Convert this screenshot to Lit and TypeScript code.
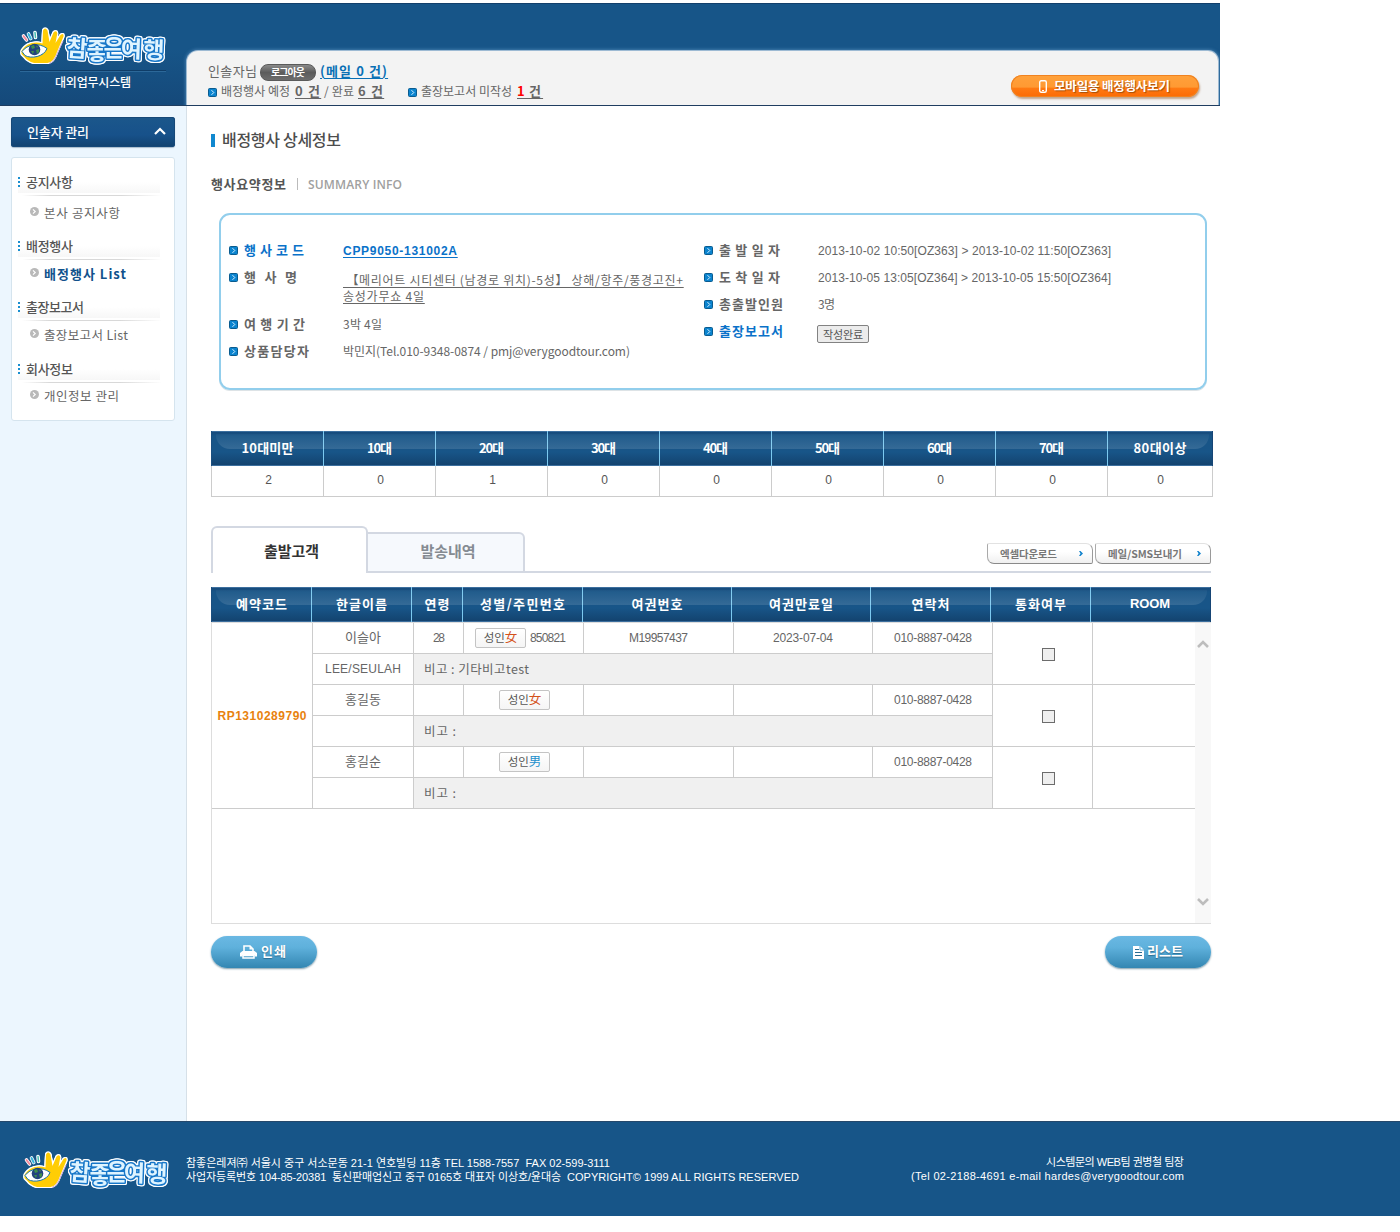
import { LitElement, html, css, svg, nothing } from "lit";
import { customElement, property } from "lit/decorators.js";

/** A single line of text whose tracking is set so that it spans `w` pixels. */
@customElement("fit-text")
class FitText extends LitElement {
  @property({ type: Number }) w = 0;
  @property() text = "";

  static styles = css`
    :host { display: inline-block; white-space: pre; flex: none; text-align: left; }
    .run { display: inline-block; text-decoration: inherit; }
  `;

  render() {
    return html`<span class="run">${this.text}</span>`;
  }

  updated() {
    const run = this.renderRoot.querySelector<HTMLElement>(".run")!;
    run.style.letterSpacing = "0";
    const natural = run.getBoundingClientRect().width;
    const n = Math.max(1, [...this.text].length - 1);
    const gap = (this.w - natural) / n;
    run.style.letterSpacing = `${gap.toFixed(3)}px`;
    run.style.marginRight = `${(-gap).toFixed(3)}px`;
    this.style.width = `${this.w}px`;
  }
}

const t = (text: string, w: number, cls = "") =>
  html`<fit-text class=${cls} .text=${text} .w=${w}></fit-text>`;

const brandLogo = html`
  <svg class="brand" width="152" height="46" viewBox="17 22 152 46" role="img">
    <g class="hand-outline">
      <path fill="#ffcd05" d="M21.500 51 C26 43.500 34 41 42.500 43.500 L43 30.500 Q45 26.500 47.500 30.500 L49.500 42 L53.500 32.500 Q56.500 29.500 57.300 33.500 L55.500 43 L60.500 35 Q64 32.500 63.500 36.500 L57 52 Q54 62 47.500 63 L34 63 Q27.500 61 24.500 57 L21.500 54 Z"/>
    </g>
    <path fill="none" stroke="#c7a3d8" stroke-width="1" d="M63 41 L57.500 53 Q54.500 61.500 49 63.500"/>
    <path fill="#fff" stroke="#1675a8" stroke-width="1" d="M22 51.500 C27 44.500 39 42 47 48.500 C44 57 31 59 25 55.500 Z"/>
    <circle cx="34.500" cy="49.500" r="5.800" fill="#24427d"/>
    <path fill="#3f8f4c" d="M31 46l3-1 1 3-3 1zM36 50l3-1v3l-2 2zM31 51l3 0-1 3zM36 45.500l2 1-1 1.500z"/>
    <g fill="none" stroke-width="2" stroke-linecap="round">
      <path stroke="#fff" stroke-width="3.600" d="M23.500 36l3 4M28.500 34l2.200 4.500M35 32.500l.5 5"/>
      <path stroke="#f48a9c" d="M23.500 36l3 4"/>
      <path stroke="#35b5dc" d="M28.500 34l2.200 4.500"/>
      <path stroke="#46c0b2" stroke-width="1.500" d="M35 32.500l.5 5"/>
    </g>
    <text class="brand-name" x="66 86.500 103.500 120.500 143" y="56 58.500 56 57 58" rotate="4 0 0 2 2">참좋은여행</text>
  </svg>`;

const bullet = html`
  <svg class="bullet" width="9" height="9" viewBox="0 0 9 9">
    <rect x=".5" y=".5" width="8" height="8" rx="1" fill="#0b84cf" stroke="#0a5b8e"/>
    <path d="M3.500 2.200L5.800 4.500 3.500 6.800" fill="none" stroke="#d9f1ff"/>
  </svg>`;

const ring = html`
  <svg class="ring" width="9" height="9" viewBox="0 0 9 9">
    <circle cx="4.500" cy="4.500" r="4.500" fill="#b9b9b9"/>
    <path d="M3 2.400l2.200 2.100L3 6.600" fill="none" stroke="#fff" stroke-width="1.200"/>
  </svg>`;

const chevron = (d: string, cls: string, w: number, h: number) =>
  html`<svg class=${cls} width=${w} height=${h} viewBox="0 0 ${w} ${h}">${svg`<path d=${d}/>`}</svg>`;

const menu = [
  { title: "공지사항", tw: 47, item: "본사 공지사항", iw: 76, active: false },
  { title: "배정행사", tw: 47, item: "배정행사 List", iw: 82, active: true },
  { title: "출장보고서", tw: 58, item: "출장보고서 List", iw: 84, active: false },
  { title: "회사정보", tw: 47, item: "개인정보 관리", iw: 75, active: false },
];

const ages: [string, number, string][] = [
  ["10대미만", 52, "2"], ["10대", 25, "0"], ["20대", 25, "1"],
  ["30대", 25, "0"], ["40대", 25, "0"], ["50대", 25, "0"],
  ["60대", 25, "0"], ["70대", 25, "0"], ["80대이상", 53, "0"],
];

const columns: [string, number][] = [
  ["예약코드", 51], ["한글이름", 51], ["연령", 25], ["성별/주민번호", 85],
  ["여권번호", 51], ["여권만료일", 64], ["연락처", 38], ["통화여부", 51], ["ROOM", 40],
];

const guests = [
  { name: "이슬아", latin: "LEE/SEULAH", age: "28", sex: "女", birth: "850821", pass: "M19957437", exp: "2023-07-04", note: "비고 : 기타비고test", nw: 105 },
  { name: "홍길동", latin: "", age: "", sex: "女", birth: "", pass: "", exp: "", note: "비고 :", nw: 32 },
  { name: "홍길순", latin: "", age: "", sex: "男", birth: "", pass: "", exp: "", note: "비고 :", nw: 32 },
];

@customElement("app-root")
class AppRoot extends LitElement {
  static styles = css`
    :host {
      display: block; width: 1400px; height: 1232px; overflow: hidden; background: #fff;
      font: 12px/16px "Noto Sans CJK KR", sans-serif; color: #666;
    }
    * { box-sizing: border-box; }
    svg { display: block; flex: none; }
    .b { font-weight: 700; }
    .u { text-decoration: underline; text-underline-offset: 2px; text-decoration-thickness: 1px; }
    .n { font-family: "Liberation Sans", "Noto Sans CJK KR", sans-serif; }

    .brand-name {
      font: 700 23px "Noto Sans CJK KR", sans-serif; fill: #dff4ff;
      stroke: #1777c9; stroke-width: 3px; stroke-linejoin: round; paint-order: stroke;
      filter: drop-shadow(1px 0 #fff) drop-shadow(-1px 0 #fff) drop-shadow(0 1px #fff) drop-shadow(0 -1px #fff);
    }
    .hand-outline { filter: drop-shadow(1px 0 #fff) drop-shadow(-1px 0 #fff) drop-shadow(0 1px #fff) drop-shadow(0 -1px #fff); }

    /* header */
    .header {
      display: flex; width: 1220px; height: 103px; margin-top: 3px; background: #175588;
      border-top: 1px solid #123f6b; border-bottom: 1px solid #1f3d60;
    }
    .header-wrap { display: flow-root; background: #fff; }
    .head-left { width: 186px; padding: 18px 0 0 17px; background: linear-gradient(#175588 45%, #15497a); }
    .head-rule { width: 146px; height: 2px; margin: 2px 0 2px 3px; border-top: 1px solid #0f3d68; border-bottom: 1px solid #2c6899; }
    .head-sub { display: block; margin-left: 38px; color: #fff; font-weight: 500; font-size: 12px; line-height: 15px; }
    .panel {
      display: flex; justify-content: space-between; width: 1031px; height: 54px; margin: 47px 0 0 1px;
      padding: 0 19px 0 21px; background: #f3f3f3; border-radius: 11px 10px 0 0;
      box-shadow: 0 0 0 1px #9dbad3, 0 0 3px 2px #3d77a8;
      clip-path: inset(-6px -2px 0 -6px);
    }
    .status { padding-top: 11px; }
    .line { display: flex; align-items: center; height: 20px; }
    .line fit-text { padding-bottom: 2px; }
    .line .logout fit-text { padding-bottom: 0; }
    .who { font-size: 13px; margin-right: 3px; }
    .logout {
      display: flex; align-items: center; justify-content: center; width: 56px; height: 17px; margin-right: 4px;
      border-radius: 8px; background: linear-gradient(#8a8a8a, #5c5c5c 50%, #6d6d6d); border: 1px solid #5a5a5a;
      color: #fff; font-weight: 700; font-size: 10px; line-height: 14px;
    }
    .mail { color: #0a70b5; font-size: 13px; }
    .line .bullet { margin-right: 4px; }
    .count { font-size: 13px; font-weight: 700; }
    .g4 { margin-left: 4px; } .g5 { margin-left: 5px; } .g25 { margin-left: 25px; }
    .red { color: #f00; text-decoration-color: #666; }
    .mobile {
      display: flex; align-items: center; width: 188px; height: 22px; margin-top: 24px; padding-left: 28px;
      border-radius: 11px; background: linear-gradient(#ffa13b, #ff9a33 55%, #ff7a12 60%, #fb6a05);
      box-shadow: inset 0 0 0 1px #f08220, 1px 2px 2px #a0704a99;
      color: #fff; font-weight: 700; font-size: 12.500px; text-shadow: 1px 1px 1px #a34c08;
    }
    .mobile svg { margin-right: 7px; }

    /* body */
    .body { display: flex; height: 1015px; }
    .side { width: 187px; padding: 11px 0 0 11px; background: #ecf6fe; border-right: 1px solid #d6e0e8; }
    .side-title {
      display: flex; align-items: center; justify-content: space-between; width: 164px; height: 30px;
      padding: 0 9px 1px 16px; border-radius: 3px; background: linear-gradient(#1b578b, #17518a 60%, #12426f);
      box-shadow: inset 0 0 0 1px #164878, 0 1px 1px #a9bccb; color: #fff; font-weight: 500; font-size: 13px;
    }
    .up { fill: none; stroke: #fff; stroke-width: 2.200; }
    .menu {
      display: grid; grid-template-rows: 64px 61px 62px 50px; width: 164px; height: 264px; margin-top: 10px;
      padding: 13px 0 0 6px; background: #fff; border: 1px solid #d5e4ee; border-radius: 3px;
    }
    .menu-title { display: flex; align-items: center; height: 22px; font-size: 13px; color: #555; font-weight: 500; background: linear-gradient(#fff 50%, #f7f7f7); clip-path: inset(0 14px 0 0); }
    .dots { width: 2px; height: 10px; margin-right: 6px; background: repeating-linear-gradient(#1a8fd0 0 2px, transparent 2px 4px); }
    .menu-rule { width: 140px; height: 3px; margin-left: 4px; background: linear-gradient(90deg, #fff, #d8d8d8 20%, #d8d8d8 70%, #fff); clip-path: inset(2px 0 0 0); }
    .menu-item { display: flex; align-items: center; height: 20px; margin-top: 4px; padding-left: 12px; font-size: 12.500px; }
    .group:first-child .menu-item { margin-top: 7px; }
    .group:last-child .menu-item { margin-top: 3px; }
    .menu-item .ring { margin: -4px 5px 0 0; }
    .menu-item.active { color: #11528c; font-weight: 700; font-size: 13px; }

    .main { width: 1033px; padding-left: 24px; }
    .title { display: flex; align-items: center; height: 20px; margin-top: 24px; color: #4d4d4d; font-weight: 500; font-size: 16px; line-height: 20px; }
    .title fit-text { padding-bottom: 3px; }
    .title-bar { width: 4px; height: 13px; margin-right: 7px; background: #1088cf; }
    .sub { display: flex; align-items: center; height: 20px; margin-top: 24px; font-size: 13px; font-weight: 700; color: #555; }
    .sub-sep { width: 1px; height: 12px; margin: 0 10px 0 11px; background: #bbb; }
    .sub-en { color: #a0a0a0; font: 600 12px/16px "Open Sans", sans-serif; padding-top: 1px; }

    .summary {
      display: flex; width: 988px; height: 177px; margin: 19px 0 0 8px; padding: 22px 0 0 8px;
      border: 2px solid #92ceec; border-radius: 11px; box-shadow: 0 1px 0 #dde3e6;
    }
    .half { width: 475px; }
    .pair { display: flex; min-height: 27px; line-height: 27px; }
    .pair.tall { height: 47px; }
    .key { display: flex; align-items: center; width: 114px; height: 27px; font-weight: 700; font-size: 13px; }
    .key fit-text { line-height: 18px; padding-bottom: 2px; }
    .key .bullet { margin-right: 6px; }
    .blue { color: #0a72c9; }
    .val { height: 27px; line-height: 25px; }
    .two { display: flex; flex-direction: column; padding-top: 8px; line-height: 16px; font-size: 12px; }
    .done {
      display: flex; align-items: center; justify-content: center; width: 52px; height: 18px; margin: 7px 0 0 -1px; padding-bottom: 1px;
      border: 1px solid #828282; border-radius: 2px; background: #ececec; font-size: 11px; line-height: 16px; color: #555;
    }

    .ages, .cols { display: grid; color: #fff; font-weight: 700; font-size: 13px; position: relative; }
    .ages { grid-template-columns: repeat(8, 112px) 106px; width: 1002px; margin-top: 41px; }
    .cols { grid-template-columns: 100px 100px 51px 120px 149px 139px 120px 100px 121px; width: 1000px; margin-top: 14px; }
    .th {
      display: flex; align-items: center; justify-content: center; height: 35px; padding-bottom: 2px; border-left: 1px solid #7cc9f0;
      background: linear-gradient(#3c6f9e 0 1px, #164a7b 1px, #185587 5px, #185588 60%, #13436f 34px, #3c6f9e 34px);
    }
    .th fit-text { position: relative; z-index: 1; }
    .th:first-child { border-left-color: #1b4f80; }
    .ages .th:nth-child(9), .cols .th:last-child { border-right: 1px solid #164575; }
    .cols .th:last-child { padding-top: 1px; padding-right: 1px; }
    .ages::before, .cols::before {
      content: ""; position: absolute; left: 5px; right: 4px; top: 3px; height: 15px; border-radius: 0 0 14px 14px;
      background: linear-gradient(#ffffff08, #ffffff20);
    }
    .td { height: 31px; line-height: 29px; padding-left: 2px; text-align: center; border: solid #ccc; border-width: 0 0 1px 1px; background: #fff; font-weight: 400; font-size: 12px; color: #555; }
    .td:last-child { border-right-width: 1px; padding-left: 1px; }

    .tabs { display: flex; align-items: flex-end; width: 1000px; height: 47px; margin-top: 29px; }
    .tab { display: flex; align-items: center; justify-content: center; border: 2px solid #d3d8e2; font-size: 15px; font-weight: 700; }
    .tab.on { width: 157px; height: 47px; padding: 0 0 0 4px; border-bottom: 0; border-radius: 6px 6px 0 0; color: #333; }
    .tab.off { width: 157px; height: 41px; padding-left: 5px; padding-bottom: 4px; border-left: 0; border-radius: 0 6px 0 0; background: #f6f9fd; color: #858b92; }
    .tab-rest { display: flex; justify-content: flex-end; gap: 2px; flex: 1; height: 30px; border-bottom: 2px solid #d3d8e2; }
    .mini {
      display: flex; align-items: center; justify-content: space-between; height: 21px; padding: 0 9px 0 12px;
      border: solid; border-width: 1px; border-color: #e2e2e2 #9a9a9a #8a8a8a #aaa; border-radius: 2px 7px 2px 7px;
      background: linear-gradient(#fff 40%, #f0f0f0); font-size: 10.500px; font-weight: 700; color: #777; line-height: 14px;
    }
    .m1 { width: 106px; } .m2 { width: 116px; }
    .go { fill: #1383cc; }

    .list { display: flex; width: 1000px; height: 302px; border: solid #ddd; border-width: 1px 0 1px 1px; }
    .rows { display: grid; width: 983px; grid-template-columns: 100px 101px 50px 120px 150px 139px 120px 100px 103px; grid-auto-rows: 31px; }
    .c { display: flex; align-items: center; justify-content: center; border: solid #ccc; border-width: 0 0 1px 1px; }
    .c > fit-text { padding-bottom: 2px; }
    .c > fit-text.n { padding-bottom: 0; }
    .c.code { grid-column: 1; grid-row: span 6; border-left: 0; color: #e8820e; font-weight: 700; }
    .c.span2 { grid-row: span 2; }
    .c.note { grid-column: 3 / span 5; justify-content: flex-start; padding-left: 10px; background: #f0f0f0; font-size: 12.500px; }
    .c.note > fit-text { padding-bottom: 1px; }
    .c.latin { grid-column: 2; }
    .c.first { grid-column: 2; font-size: 13px; }
    .c.num { padding-left: 1px; }
    .c.check { padding: 2px 0 0 12px; }
    .c.sex { gap: 4px; padding-left: 2px; }
    .c.sex.with { padding: 0 6px 0 0; }
    .box { width: 13px; height: 13px; border: 1px solid #6c6c6c; background: #efefef; }
    .badge {
      display: flex; align-items: center; justify-content: center; width: 51px; height: 20px; border: 1px solid #c4c4c4;
      border-radius: 2px; background: linear-gradient(#fff, #f5f5f5); color: #555; font-size: 11.500px; line-height: 16px; padding-bottom: 2px;
    }
    .female, .male { font-size: 12.500px; }
    .female { color: #d4521c; } .male { color: #2490cc; }
    .scroll { display: flex; flex-direction: column; justify-content: space-between; align-items: center; width: 16px; padding: 16px 0 16px; background: #f8f8f8; }
    .arrow { fill: none; stroke: #bdbdbd; stroke-width: 2.600; }

    .actions { display: flex; justify-content: space-between; width: 1000px; margin-top: 12px; }
    .pill {
      display: flex; align-items: center; width: 106px; height: 32px; border-radius: 16px; color: #fff;
      background: linear-gradient(#6ab8e3, #5fb1dc 35%, #3386b2); box-shadow: 0 1px 2px #7f9cab;
      font-weight: 700; font-size: 13px; line-height: 18px; text-shadow: 0 1px 1px #2c6d92;
    }
    .pill fit-text { padding-bottom: 2px; }
    .print { padding-left: 29px; gap: 4px; }
    .tolist { padding-left: 28px; gap: 3px; }

    .footer {
      display: flex; width: 1400px; height: 95px; padding: 24px 0 0 20px; background: #175588; border-top: 1px solid #25486b;
      color: #fff; font: 11px/13px "Liberation Sans", "Noto Sans CJK KR", sans-serif;
    }
    .foot-text { width: 725px; margin-left: 14px; padding-top: 10px; }
    .foot-text > div { display: flex; gap: 6px; height: 14px; align-items: center; }
    .foot-right { display: flex; flex-direction: column; align-items: flex-end; gap: 1px; width: 273px; padding-top: 10px; }
  `;

  private key(label: string, w: number, blue = false) {
    return html`<div class="key ${blue ? "blue" : ""}">${bullet}${t(label, w)}</div>`;
  }

  private guest(g: (typeof guests)[number]) {
    return html`
      <div class="c first">${t(g.name, 36)}</div>
      <div class="c num">${g.age ? t(g.age, 12, "n") : nothing}</div>
      <div class="c sex ${g.birth ? "with" : ""}">
        <span class="badge">${t("성인", 21)}<span class=${g.sex === "女" ? "female" : "male"}>${g.sex}</span></span>
        ${g.birth ? t(g.birth, 36, "n") : nothing}
      </div>
      <div class="c">${g.pass ? t(g.pass, 59, "n") : nothing}</div>
      <div class="c">${g.exp ? t(g.exp, 60, "n") : nothing}</div>
      <div class="c num">${t("010-8887-0428", 78, "n")}</div>
      <div class="c span2 check"><span class="box"></span></div>
      <div class="c span2"></div>
      <div class="c latin">${g.latin ? t(g.latin, 76, "n") : nothing}</div>
      <div class="c note">${t(g.note, g.nw)}</div>`;
  }

  render() {
    return html`
      <div class="header-wrap"><header class="header">
        <div class="head-left">
          ${brandLogo}
          <div class="head-rule"></div>
          ${t("대외업무시스템", 76, "head-sub")}
        </div>
        <div class="panel">
          <div class="status">
            <div class="line">
              ${t("인솔자님", 49, "who")}
              <span class="logout">${t("로그아웃", 34)}</span>
              ${t("(메일 0 건)", 67, "mail b u")}
            </div>
            <div class="line">
              ${bullet}${t("배정행사 예정", 69)}${t("0 건", 25, "count u g5")}
              ${t("/ 완료", 30, "g4")}${t("6 건", 25, "count u g4")}
              <span class="g25"></span>${bullet}${t("출장보고서 미작성", 91)}
              ${t("1", 7, "count u red g5")}${t(" 건", 17, "count u")}
            </div>
          </div>
          <div class="mobile">
            <svg width="8" height="13" viewBox="0 0 8 13"><rect x=".7" y=".7" width="6.600" height="11.600" rx="1.500" fill="none" stroke="#fff" stroke-width="1.400"/><path d="M3 10.500h2" stroke="#fff"/></svg>
            ${t("모바일용 배정행사보기", 116)}
          </div>
        </div>
      </header></div>

      <div class="body">
        <nav class="side">
          <div class="side-title">${t("인솔자 관리", 62)}${chevron("M1 7L6 2l5 5", "up", 12, 9)}</div>
          <div class="menu">
            ${menu.map((m) => html`
              <div class="group">
                <div class="menu-title"><span class="dots"></span>${t(m.title, m.tw)}</div>
                <div class="menu-rule"></div>
                <div class="menu-item ${m.active ? "active" : ""}">${ring}${t(m.item, m.iw)}</div>
              </div>`)}
          </div>
        </nav>

        <main class="main">
          <div class="title"><span class="title-bar"></span>${t("배정행사 상세정보", 119)}</div>
          <div class="sub">${t("행사요약정보", 75)}<span class="sub-sep"></span>${t("SUMMARY INFO", 94, "sub-en")}</div>

          <section class="summary">
            <div class="half">
              <div class="pair">${this.key("행 사 코 드", 60, true)}<div class="val">${t("CPP9050-131002A", 114, "b u blue n")}</div></div>
              <div class="pair tall">${this.key("행  사  명", 53)}
                <div class="two">${t(" 【메리어트 시티센터 (남경로 위치)-5성】 상해/항주/풍경고진+", 340, "u")}${t("송성가무쇼 4일", 81, "u")}</div>
              </div>
              <div class="pair">${this.key("여 행 기 간", 61)}<div class="val">${t("3박 4일", 39)}</div></div>
              <div class="pair">${this.key("상품담당자", 65)}<div class="val">${t("박민지(Tel.010-9348-0874 / pmj@verygoodtour.com)", 287)}</div></div>
            </div>
            <div class="half">
              <div class="pair">${this.key("출 발 일 자", 61)}<div class="val">${t("2013-10-02 10:50[OZ363] > 2013-10-02 11:50[OZ363]", 293, "n")}</div></div>
              <div class="pair">${this.key("도 착 일 자", 61)}<div class="val">${t("2013-10-05 13:05[OZ364] > 2013-10-05 15:50[OZ364]", 293, "n")}</div></div>
              <div class="pair">${this.key("총출발인원", 64)}<div class="val">${t("3명", 17)}</div></div>
              <div class="pair">${this.key("출장보고서", 64, true)}<div class="done">${t("작성완료", 40)}</div></div>
            </div>
          </section>

          <section class="ages">
            ${ages.map(([label, w]) => html`<div class="th">${t(label, w)}</div>`)}
            ${ages.map(([, , n]) => html`<div class="td n">${n}</div>`)}
          </section>

          <div class="tabs">
            <div class="tab on">${t("출발고객", 55)}</div>
            <div class="tab off">${t("발송내역", 55)}</div>
            <div class="tab-rest">
              <span class="mini m1">${t("엑셀다운로드", 57)}${chevron("M0 0h1.500L4 2.500 1.500 5H0l1.500-2.500z", "go", 4, 5)}</span>
              <span class="mini m2">${t("메일/SMS보내기", 74)}${chevron("M0 0h1.500L4 2.500 1.500 5H0l1.500-2.500z", "go", 4, 5)}</span>
            </div>
          </div>

          <div class="cols">
            ${columns.map(([label, w]) => html`<div class="th">${t(label, w, label === "ROOM" ? "n" : "")}</div>`)}
          </div>
          <div class="list">
            <div class="rows">
              <div class="c code">${t("RP1310289790", 89, "n")}</div>
              ${guests.map((g) => this.guest(g))}
            </div>
            <div class="scroll">
              ${chevron("M1 8l5-5 5 5", "arrow", 12, 9)}
              ${chevron("M1 1l5 5 5-5", "arrow", 12, 9)}
            </div>
          </div>

          <div class="actions">
            <span class="pill print">
              <svg width="17" height="14" viewBox="0 0 17 14"><path d="M4 6V1h6l3 3v2" fill="none" stroke="#fff" stroke-width="1.600"/><path d="M9.500 1v3.500H13z" fill="#fff"/><path d="M2.500 6h12L17 8v3.500h-2.500V10h-12v1.500H0V8z" fill="#fff"/><path d="M3 10.500h11V13H3z" fill="none" stroke="#fff" stroke-width="1.500"/></svg>
              ${t("인쇄", 25)}
            </span>
            <span class="pill tolist">
              <svg width="11" height="13" viewBox="0 0 11 13"><path d="M0 0h7l4 4v9H0z" fill="#fff"/><path d="M2 3.500h4M2 6.500h7M2 9.500h7" stroke="#2b6d92" fill="none"/><path d="M7 0v4h4" stroke="#5badd9" fill="none"/></svg>
              ${t("리스트", 36)}
            </span>
          </div>
        </main>
      </div>

      <footer class="footer">
        ${brandLogo}
        <div class="foot-text">
          <div>${t("참좋은레져㈜ 서울시 중구 서소문동 21-1 연호빌딩 11층 TEL 1588-7557  FAX 02-599-3111", 424)}</div>
          <div>${t("사업자등록번호 104-85-20381  통신판매업신고 중구 0165호 대표자 이상호/윤대승", 375)}${t("COPYRIGHT© 1999 ALL RIGHTS RESERVED", 232)}</div>
        </div>
        <div class="foot-right">
          ${t("시스템문의 WEB팀 권병철 팀장", 138)}
          ${t("(Tel 02-2188-4691 e-mail hardes@verygoodtour.com", 273)}
        </div>
      </footer>`;
  }
}
